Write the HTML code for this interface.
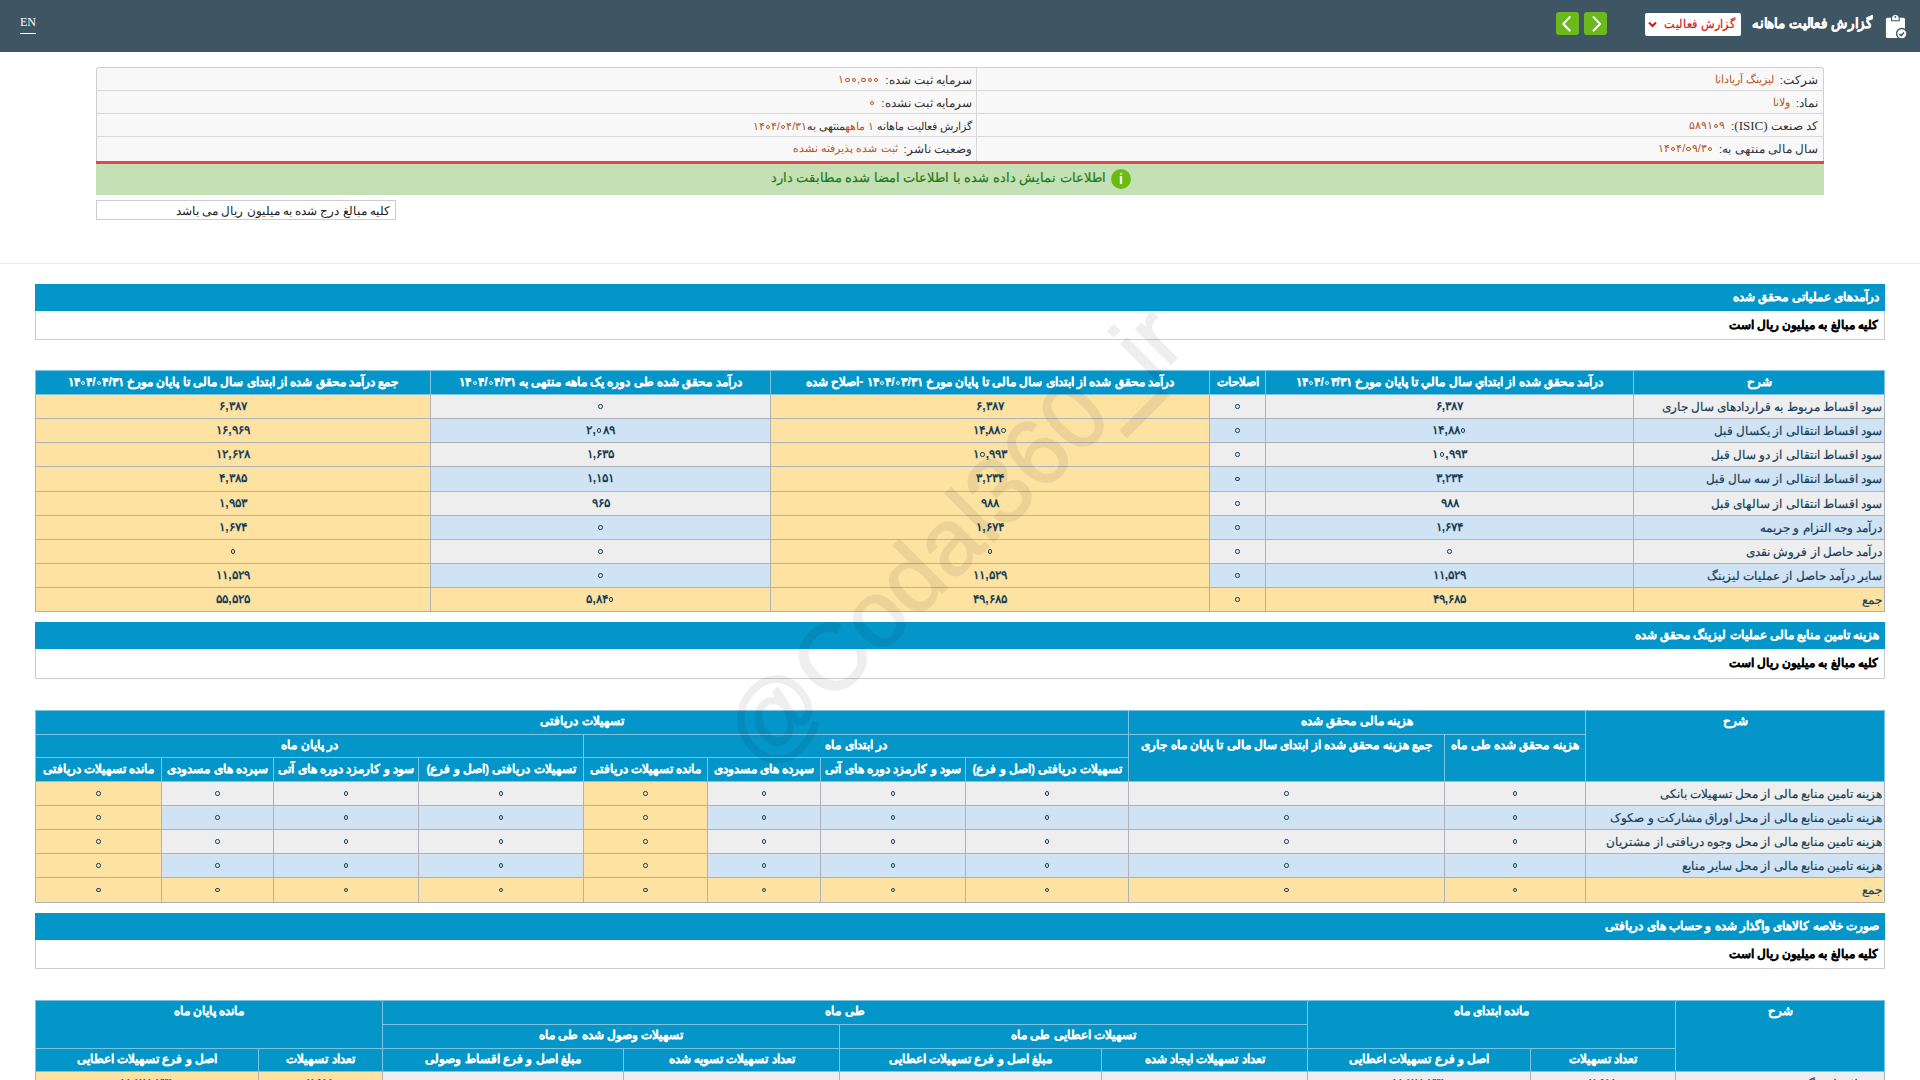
<!DOCTYPE html>
<html lang="fa" dir="rtl">
<head>
<meta charset="utf-8">
<title>Codal</title>
<style>
*{box-sizing:border-box;margin:0;padding:0}
html,body{width:1920px;height:1080px;overflow:hidden;background:#fff}
body{position:relative;font-family:"Liberation Sans",sans-serif;font-size:12px;color:#222;direction:rtl}
.abs{position:absolute}
.n{direction:ltr;unicode-bidi:isolate;display:inline-block}
.z{display:inline-block;width:4.4px;height:4.4px;border:1.6px solid currentColor;border-radius:50%;margin:0 1.2px;vertical-align:1px}
.lat{font-family:"Liberation Serif",serif;font-size:13px}
#hdr{left:0;top:0;width:1920px;height:52px;background:#3e5563}
#en{left:20px;top:15px;color:#fff;font-family:"Liberation Serif",serif;font-size:12px;direction:ltr;line-height:14px}
#en:after{content:"";position:absolute;left:0;right:0;top:18px;height:1px;background:#fff}
#title{right:47px;top:15px;color:#fff;font-size:14px;font-weight:bold;white-space:nowrap;-webkit-text-stroke:0.3px #fff;transform:scaleX(0.96);transform-origin:100% 50%}
#icon{left:1884px;top:13px}
#dd{left:1645px;top:13px;width:96px;height:23px;background:#fff;border-radius:2px}
#ddt{right:6px;top:3.5px;color:#d01818;font-size:12px;white-space:nowrap;transform:scaleX(0.93);transform-origin:100% 50%}
.gbtn{top:12px;width:23px;height:23px;background:#6cb91e;border-radius:3px}
.gbtn svg{display:block}
#info{left:96px;top:67px;width:1728px;height:94px;border:1px solid #cfcfcf;border-bottom:none;border-radius:3px 3px 0 0;background:#f8f8f8;overflow:hidden}
.irow{position:absolute;left:0;width:100%;height:23px;border-bottom:1px solid #d8d8d8}
.icell{position:absolute;top:1px;height:22px;line-height:22px;white-space:nowrap;font-size:11.6px;color:#333}
.c2{right:851px}
#vdiv{left:879px;top:0;width:1px;height:95px;background:#d8d8d8}
.val{color:#b8531b;margin-right:6px;font-size:11px;position:relative;top:-1px}
.val .n .z{width:4.4px;height:4.4px;border-width:1.2px;margin:0 1px}
#red{left:96px;top:161px;width:1728px;height:3px;background:#e2474a}
#green{left:96px;top:164px;width:1728px;height:31px;background:#c3e1b5}
#gtext{right:718px;top:6px;color:#237a14;font-size:12.6px;white-space:nowrap;-webkit-text-stroke:0.2px #237a14}
#ginfo{left:1015px;top:5px;width:20px;height:20px;border-radius:50%;background:#6bbb14;color:#fff;font-weight:bold;font-size:14px;line-height:20px;text-align:center;font-family:"Liberation Sans",sans-serif}
#note{left:96px;top:200px;width:300px;height:20px;border:1px solid #cccccc;font-size:11.8px;line-height:20px;padding-right:5px;white-space:nowrap}
#hr{left:0;top:263px;width:1920px;height:1px;background:#ececec}
.sec{left:35px;width:1850px;height:27px;background:#0496c9;color:#fff;font-weight:bold;font-size:12px;line-height:27px;padding-right:6px;white-space:nowrap}
.secnote{left:35px;width:1850px;height:29px;line-height:28px;border:1px solid #cccccc;border-top:none;font-weight:bold;font-size:12px;padding-right:6px;white-space:nowrap;color:#000}
table{position:absolute;border-collapse:collapse;table-layout:fixed;font-size:12px}
th{background:#0496c9;color:#fff;font-weight:bold;border:1px solid #7ec3e0;vertical-align:top;white-space:nowrap;overflow:hidden;line-height:22px;padding:0}
td{border:1px solid #acb2b8;text-align:center;color:#173f5a;white-space:nowrap;overflow:hidden;line-height:22px;padding:0}
td .n{font-weight:bold;position:relative;top:-1px}
td.l{-webkit-text-stroke:0.2px #173f5a}
td.l{text-align:right;padding-right:2px;font-size:11.5px}
tr.g td{background:#eeeeee}
tr.b td{background:#cfe3f5}
tr.y td,tr td.y{background:#fde2a1}
#wm{left:603px;top:487px;width:700px;text-align:center;transform:rotate(-45deg);font-size:94px;font-weight:normal;color:#000;opacity:0.062;-webkit-text-stroke:1.6px #000;direction:ltr;white-space:nowrap;line-height:100px;pointer-events:none}
#wm .u{-webkit-text-stroke:5px #000}
tr.up th,.t3 th{line-height:20px}
th{-webkit-text-stroke:0.2px #fff}
.sec{-webkit-text-stroke:0.2px #fff}
#ddt{-webkit-text-stroke:0.2px #d01818}
.secnote{-webkit-text-stroke:0.25px #000;font-size:11.8px}

</style>
</head>
<body>

<div id="hdr" class="abs">
  <div id="en" class="abs">EN</div>
  <div id="title" class="abs">گزارش فعالیت ماهانه</div>
  <div id="icon" class="abs"><svg width="26" height="28" viewBox="0 0 26 28"><rect x="1.9" y="4.85" width="19.1" height="20.25" rx="1.5" fill="#fff"/><path d="M7.6 7.8V5.2a3.8 3.8 0 0 1 7.6 0V7.8Z" fill="#fff" stroke="#3e5563" stroke-width="1.1"/><circle cx="11.4" cy="3.9" r="0.9" fill="#3e5563"/><circle cx="17.8" cy="20.7" r="5.2" fill="#fff" stroke="#3e5563" stroke-width="1.4"/><path d="M15.4 21l1.7 1.6 3-3.1" fill="none" stroke="#3e5563" stroke-width="1.5"/></svg></div>
  <div id="dd" class="abs"><span id="ddt" class="abs">گزارش فعالیت</span><svg class="abs" style="left:3px;top:8px" width="9" height="7" viewBox="0 0 9 7"><path d="M1 1.5l3.5 3.5 3.5-3.5" fill="none" stroke="#d01818" stroke-width="2"/></svg></div>
  <div class="gbtn abs" style="left:1556px"><svg width="23" height="23" viewBox="0 0 23 23"><path d="M13.7 5.1L7.3 11.9L13.7 18.6" fill="none" stroke="#fff" stroke-width="2.1" stroke-linecap="round" stroke-linejoin="round"/></svg></div>
  <div class="gbtn abs" style="left:1584px"><svg width="23" height="23" viewBox="0 0 23 23"><path d="M9.6 5.1L16 11.9L9.6 18.6" fill="none" stroke="#fff" stroke-width="2.1" stroke-linecap="round" stroke-linejoin="round"/></svg></div>
</div>

<div id="info" class="abs">
  <div class="irow" style="top:0"><div class="icell" style="right:5px">شرکت:<span class="val">لیزینگ آریادانا</span></div><div class="icell c2">سرمایه ثبت شده:<span class="val"><span class="n">۱<i class="z"></i><i class="z"></i>,<i class="z"></i><i class="z"></i><i class="z"></i></span></span></div></div>
  <div class="irow" style="top:23px"><div class="icell" style="right:5px">نماد:<span class="val">ولانا</span></div><div class="icell c2">سرمایه ثبت نشده:<span class="val"><span class="n"><i class="z"></i></span></span></div></div>
  <div class="irow" style="top:46px"><div class="icell" style="right:5px">کد صنعت <span class="lat">(ISIC)</span>:<span class="val"><span class="n">۵۸۹۱<i class="z"></i>۹</span></span></div><div class="icell c2" style="font-size:10.6px">گزارش فعالیت ماهانه <span class="val" style="margin:0;top:0;font-size:10.6px"><span class="n">۱</span> ماهه</span>منتهی به<span class="val" style="margin:0;top:0;font-size:10.6px"><span class="n">۱۴<i class="z"></i>۴/<i class="z"></i>۴/۳۱</span></span></div></div>
  <div class="irow" style="top:69px;border-bottom:none"><div class="icell" style="right:5px">سال مالی منتهی به:<span class="val"><span class="n">۱۴<i class="z"></i>۴/<i class="z"></i>۹/۳<i class="z"></i></span></span></div><div class="icell c2">وضعیت ناشر:<span class="val">ثبت شده پذیرفته نشده</span></div></div>
  <div class="abs" id="vdiv"></div>
</div>
<div id="red" class="abs"></div>
<div id="green" class="abs"><div id="gtext" class="abs">اطلاعات نمایش داده شده با اطلاعات امضا شده مطابقت دارد</div><div id="ginfo" class="abs">i</div></div>
<div id="note" class="abs">کلیه مبالغ درج شده به میلیون ریال می باشد</div>
<div id="hr" class="abs"></div>
<div class="sec abs" style="top:284px">درآمدهای عملیاتی محقق شده</div>
<div class="secnote abs" style="top:311px;height:29px;line-height:28px">کلیه مبالغ به میلیون ریال است</div>
<table style="top:370px;left:35px;width:1849px"><colgroup><col style="width:251px"><col style="width:368px"><col style="width:56px"><col style="width:439px"><col style="width:340px"><col style="width:395px"></colgroup><tr style="height:24px"><th>شرح</th><th>درآمد محقق شده از ابتداي سال مالي تا پایان مورخ <span class="n">۱۴<i class="z"></i>۴/<i class="z"></i>۳/۳۱</span></th><th>اصلاحات</th><th>درآمد محقق شده از ابتدای سال مالی تا پایان مورخ <span class="n">۱۴<i class="z"></i>۴/<i class="z"></i>۳/۳۱</span> -اصلاح شده</th><th>درآمد محقق شده طی دوره یک ماهه منتهی به <span class="n">۱۴<i class="z"></i>۴/<i class="z"></i>۴/۳۱</span></th><th>جمع درآمد محقق شده از ابتدای سال مالی تا پایان مورخ <span class="n">۱۴<i class="z"></i>۴/<i class="z"></i>۴/۳۱</span></th></tr><tr class="g" style="height:24px"><td class="l">سود اقساط مربوط به قراردادهای سال جاری</td><td class=""><span class="n">۶,۳۸۷</span></td><td class=""><span class="n"><i class="z"></i></span></td><td class="y"><span class="n">۶,۳۸۷</span></td><td class=""><span class="n"><i class="z"></i></span></td><td class="y"><span class="n">۶,۳۸۷</span></td></tr><tr class="b" style="height:24px"><td class="l">سود اقساط انتقالی از یکسال قبل</td><td class=""><span class="n">۱۴,۸۸<i class="z"></i></span></td><td class=""><span class="n"><i class="z"></i></span></td><td class="y"><span class="n">۱۴,۸۸<i class="z"></i></span></td><td class=""><span class="n">۲,<i class="z"></i>۸۹</span></td><td class="y"><span class="n">۱۶,۹۶۹</span></td></tr><tr class="g" style="height:24px"><td class="l">سود اقساط انتقالی از دو سال قبل</td><td class=""><span class="n">۱<i class="z"></i>,۹۹۳</span></td><td class=""><span class="n"><i class="z"></i></span></td><td class="y"><span class="n">۱<i class="z"></i>,۹۹۳</span></td><td class=""><span class="n">۱,۶۳۵</span></td><td class="y"><span class="n">۱۲,۶۲۸</span></td></tr><tr class="b" style="height:25px"><td class="l">سود اقساط انتقالی از سه سال قبل</td><td class=""><span class="n">۳,۲۳۴</span></td><td class=""><span class="n"><i class="z"></i></span></td><td class="y"><span class="n">۳,۲۳۴</span></td><td class=""><span class="n">۱,۱۵۱</span></td><td class="y"><span class="n">۴,۳۸۵</span></td></tr><tr class="g" style="height:24px"><td class="l">سود اقساط انتقالی از سالهای قبل</td><td class=""><span class="n">۹۸۸</span></td><td class=""><span class="n"><i class="z"></i></span></td><td class="y"><span class="n">۹۸۸</span></td><td class=""><span class="n">۹۶۵</span></td><td class="y"><span class="n">۱,۹۵۳</span></td></tr><tr class="b" style="height:24px"><td class="l">درآمد وجه التزام و جریمه</td><td class=""><span class="n">۱,۶۷۴</span></td><td class=""><span class="n"><i class="z"></i></span></td><td class="y"><span class="n">۱,۶۷۴</span></td><td class=""><span class="n"><i class="z"></i></span></td><td class="y"><span class="n">۱,۶۷۴</span></td></tr><tr class="g" style="height:24px"><td class="l">درآمد حاصل از فروش نقدی</td><td class=""><span class="n"><i class="z"></i></span></td><td class=""><span class="n"><i class="z"></i></span></td><td class="y"><span class="n"><i class="z"></i></span></td><td class=""><span class="n"><i class="z"></i></span></td><td class="y"><span class="n"><i class="z"></i></span></td></tr><tr class="b" style="height:24px"><td class="l">سایر درآمد حاصل از عملیات لیزینگ</td><td class=""><span class="n">۱۱,۵۲۹</span></td><td class=""><span class="n"><i class="z"></i></span></td><td class="y"><span class="n">۱۱,۵۲۹</span></td><td class=""><span class="n"><i class="z"></i></span></td><td class="y"><span class="n">۱۱,۵۲۹</span></td></tr><tr class="y" style="height:24px"><td class="l">جمع</td><td class=""><span class="n">۴۹,۶۸۵</span></td><td class=""><span class="n"><i class="z"></i></span></td><td class="y"><span class="n">۴۹,۶۸۵</span></td><td class=""><span class="n">۵,۸۴<i class="z"></i></span></td><td class="y"><span class="n">۵۵,۵۲۵</span></td></tr></table><div class="sec abs" style="top:622px">هزینه تامین منابع مالی عملیات لیزینگ محقق شده</div>
<div class="secnote abs" style="top:649px;height:30px;line-height:29px">کلیه مبالغ به میلیون ریال است</div>
<table style="top:710px;left:35px;width:1849px"><colgroup><col style="width:299px"><col style="width:141px"><col style="width:316px"><col style="width:163px"><col style="width:145px"><col style="width:113px"><col style="width:124px"><col style="width:165px"><col style="width:145px"><col style="width:112px"><col style="width:126px"></colgroup><tr class="up" style="height:24px"><th rowspan="3">شرح</th><th colspan="2">هزینه مالی محقق شده</th><th colspan="8">تسهیلات دریافتی</th></tr><tr class="up" style="height:23px"><th rowspan="2">هزینه محقق شده طی ماه</th><th rowspan="2">جمع هزینه محقق شده از ابتدای سال مالی تا پایان ماه جاری</th><th colspan="4">در ابتدای ماه</th><th colspan="4">در پایان ماه</th></tr><tr style="height:24px"><th>تسهیلات دریافتی (اصل و فرع)</th><th>سود و کارمزد دوره های آتی</th><th>سپرده های مسدودی</th><th>مانده تسهیلات دریافتی</th><th>تسهیلات دریافتی (اصل و فرع)</th><th>سود و کارمزد دوره های آتی</th><th>سپرده های مسدودی</th><th>مانده تسهیلات دریافتی</th></tr><tr class="g" style="height:24px"><td class="l">هزینه تامین منابع مالی از محل تسهیلات بانکی</td><td class=""><span class="n"><i class="z"></i></span></td><td class=""><span class="n"><i class="z"></i></span></td><td class=""><span class="n"><i class="z"></i></span></td><td class=""><span class="n"><i class="z"></i></span></td><td class=""><span class="n"><i class="z"></i></span></td><td class="y"><span class="n"><i class="z"></i></span></td><td class=""><span class="n"><i class="z"></i></span></td><td class=""><span class="n"><i class="z"></i></span></td><td class=""><span class="n"><i class="z"></i></span></td><td class="y"><span class="n"><i class="z"></i></span></td></tr><tr class="b" style="height:24px"><td class="l">هزینه تامین منابع مالی از محل اوراق مشارکت و صکوک</td><td class=""><span class="n"><i class="z"></i></span></td><td class=""><span class="n"><i class="z"></i></span></td><td class=""><span class="n"><i class="z"></i></span></td><td class=""><span class="n"><i class="z"></i></span></td><td class=""><span class="n"><i class="z"></i></span></td><td class="y"><span class="n"><i class="z"></i></span></td><td class=""><span class="n"><i class="z"></i></span></td><td class=""><span class="n"><i class="z"></i></span></td><td class=""><span class="n"><i class="z"></i></span></td><td class="y"><span class="n"><i class="z"></i></span></td></tr><tr class="g" style="height:24px"><td class="l">هزینه تامین منابع مالی از محل وجوه دریافتی از مشتریان</td><td class=""><span class="n"><i class="z"></i></span></td><td class=""><span class="n"><i class="z"></i></span></td><td class=""><span class="n"><i class="z"></i></span></td><td class=""><span class="n"><i class="z"></i></span></td><td class=""><span class="n"><i class="z"></i></span></td><td class="y"><span class="n"><i class="z"></i></span></td><td class=""><span class="n"><i class="z"></i></span></td><td class=""><span class="n"><i class="z"></i></span></td><td class=""><span class="n"><i class="z"></i></span></td><td class="y"><span class="n"><i class="z"></i></span></td></tr><tr class="b" style="height:24px"><td class="l">هزینه تامین منابع مالی از محل سایر منابع</td><td class=""><span class="n"><i class="z"></i></span></td><td class=""><span class="n"><i class="z"></i></span></td><td class=""><span class="n"><i class="z"></i></span></td><td class=""><span class="n"><i class="z"></i></span></td><td class=""><span class="n"><i class="z"></i></span></td><td class="y"><span class="n"><i class="z"></i></span></td><td class=""><span class="n"><i class="z"></i></span></td><td class=""><span class="n"><i class="z"></i></span></td><td class=""><span class="n"><i class="z"></i></span></td><td class="y"><span class="n"><i class="z"></i></span></td></tr><tr class="y" style="height:25px"><td class="l">جمع</td><td class=""><span class="n"><i class="z"></i></span></td><td class=""><span class="n"><i class="z"></i></span></td><td class=""><span class="n"><i class="z"></i></span></td><td class=""><span class="n"><i class="z"></i></span></td><td class=""><span class="n"><i class="z"></i></span></td><td class="y"><span class="n"><i class="z"></i></span></td><td class=""><span class="n"><i class="z"></i></span></td><td class=""><span class="n"><i class="z"></i></span></td><td class=""><span class="n"><i class="z"></i></span></td><td class="y"><span class="n"><i class="z"></i></span></td></tr></table><div class="sec abs" style="top:913px">صورت خلاصه کالاهای واگذار شده و حساب های دریافتی</div>
<div class="secnote abs" style="top:940px;height:29px;line-height:28px">کلیه مبالغ به میلیون ریال است</div>
<table class="t3" style="top:1000px;left:35px;width:1849px"><colgroup><col style="width:209px"><col style="width:145px"><col style="width:223px"><col style="width:206px"><col style="width:262px"><col style="width:216px"><col style="width:241px"><col style="width:124px"><col style="width:223px"></colgroup><tr style="height:24px"><th rowspan="3">شرح</th><th colspan="2" rowspan="2">مانده ابتدای ماه</th><th colspan="4">طی ماه</th><th colspan="2" rowspan="2">مانده پایان ماه</th></tr><tr style="height:24px"><th colspan="2">تسهیلات اعطایی طی ماه</th><th colspan="2">تسهیلات وصول شده طی ماه</th></tr><tr style="height:23px"><th>تعداد تسهیلات</th><th>اصل و فرع تسهیلات اعطایی</th><th>تعداد تسهیلات ایجاد شده</th><th>مبلغ اصل و فرع تسهیلات اعطایی</th><th>تعداد تسهیلات تسویه شده</th><th>مبلغ اصل و فرع اقساط وصولی</th><th>تعداد تسهیلات</th><th>اصل و فرع تسهیلات اعطایی</th></tr><tr class="g" style="height:24px"><td class="l">تسهیلات لیزینگ</td><td class=""><span class="n">۲,۵۱۱</span></td><td class=""><span class="n">۱۱,۲۸۱,۷۳۱</span></td><td class=""><span class="n"><i class="z"></i></span></td><td class=""><span class="n"><i class="z"></i></span></td><td class=""><span class="n"><i class="z"></i></span></td><td class=""><span class="n"><i class="z"></i></span></td><td class="y"><span class="n">۲,۵۱۱</span></td><td class="y"><span class="n">۱۱,۲۸۱,۷۳۱</span></td></tr></table><div id="wm" class="abs">@Codal360<span class="u">_</span>ir</div>
</body>
</html>
